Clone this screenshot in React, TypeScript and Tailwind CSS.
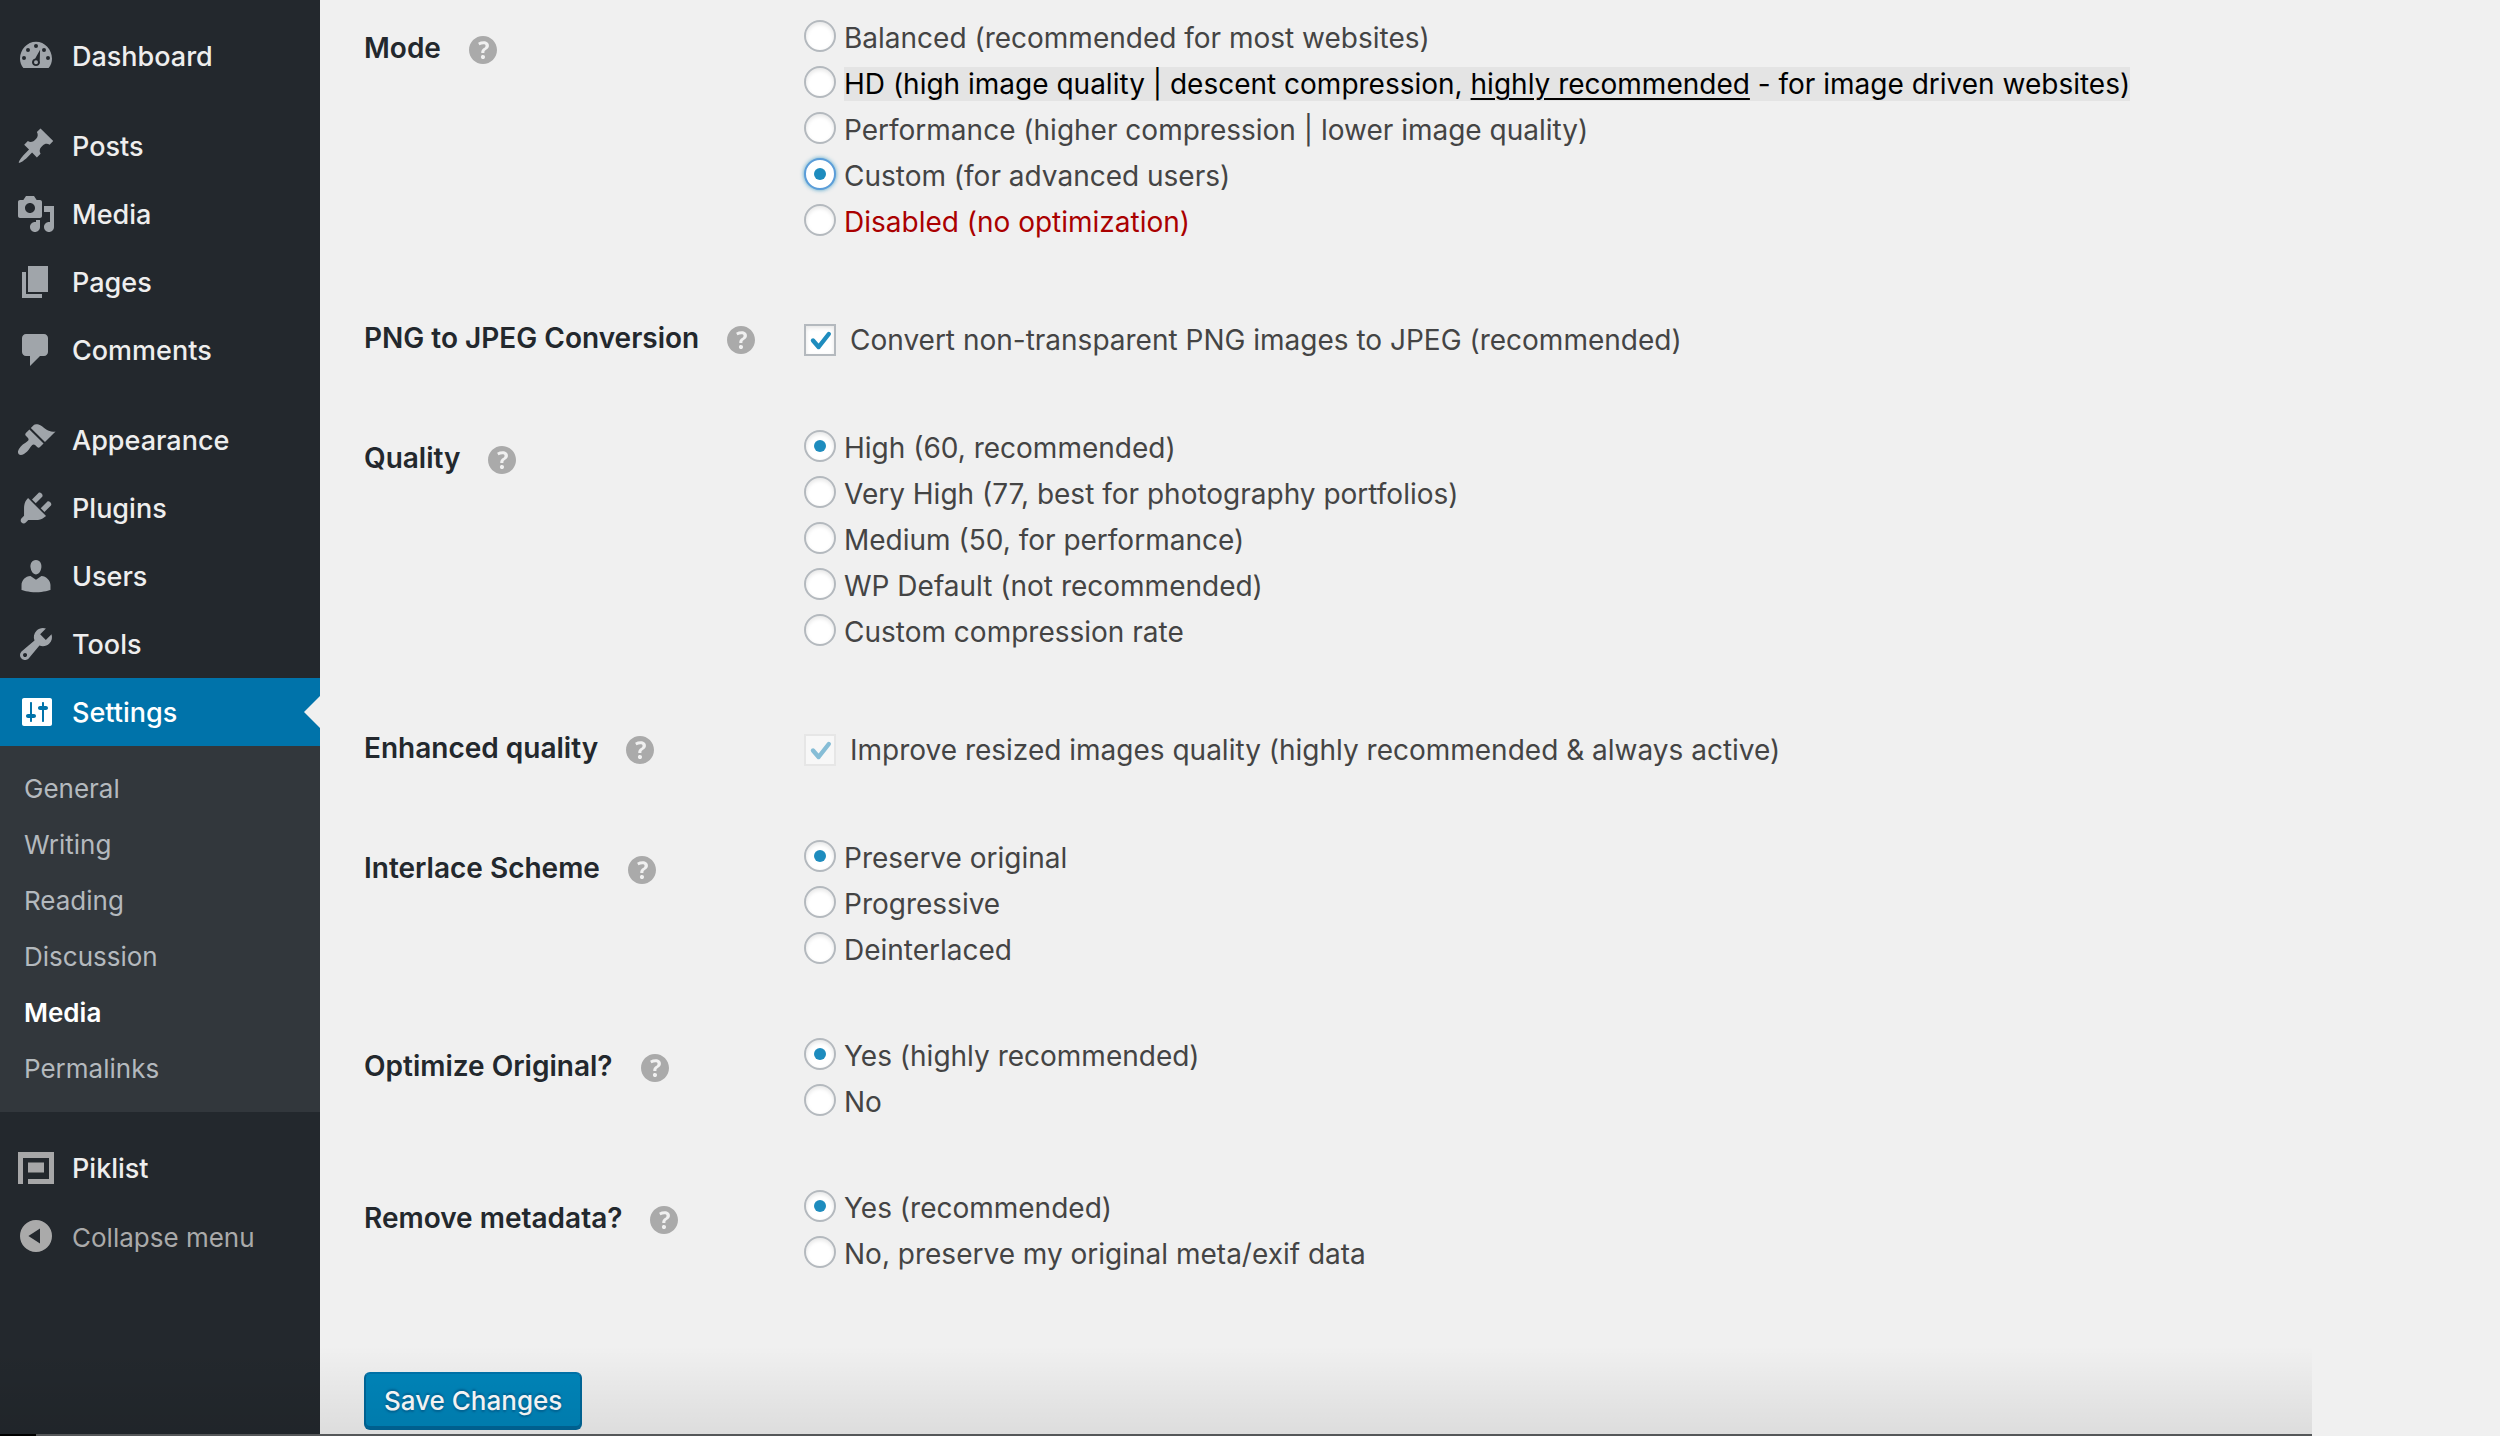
import React from "react";

type IconProps = { d: string; className?: string };

function Icon({ d, className = "" }: IconProps) {
  return (
    <svg viewBox="0 0 20 20" fill="currentColor" fillRule="evenodd" aria-hidden="true" className={`size-10 shrink-0 ${className}`}>
      <path d={d} />
    </svg>
  );
}

const icons = {
  dashboard:
    "M3.7 16h12.6c1.1-1.3 1.7-2.9 1.7-4.6C18 6.7 14.4 2.9 10 2.9S2 6.7 2 11.4c0 1.7.6 3.3 1.7 4.6zM10 4a1 1 0 1 1 0 2 1 1 0 0 1 0-2zM6 6a1 1 0 1 1 0 2 1 1 0 0 1 0-2zM14 6a1 1 0 1 1 0 2 1 1 0 0 1 0-2zM4 10a1 1 0 1 1 0 2 1 1 0 0 1 0-2zM16 10a1 1 0 1 1 0 2 1 1 0 0 1 0-2zM12.05 6.9l-.2 5.6c.1.3.15.5.15.6 0 1.05-.9 1.9-2 1.9s-2-.85-2-1.9c0-.9.7-1.7 1.6-1.9zM10 12.1a1 1 0 1 0 0 2 1 1 0 0 0 0-2z",
  posts:
    "M10.44 3.02l1.82-1.82 6.36 6.35-1.83 1.82c-1.05-.68-2.48-.57-3.41.36l-.75.75c-.92.93-1.04 2.35-.35 3.41l-1.83 1.82-2.41-2.41-2.8 2.79c-.42.42-3.38 2.71-3.8 2.29s1.86-3.39 2.28-3.81l2.79-2.79L4.1 9.36l1.83-1.82c1.05.69 2.48.57 3.4-.36l.75-.75c.93-.92 1.05-2.35.36-3.41z",
  media:
    "M13 11V4c0-.55-.45-1-1-1h-1.67L9 1H5L3.67 3H2c-.55 0-1 .45-1 1v7c0 .55.45 1 1 1h10c.55 0 1-.45 1-1zM7 4.5c1.38 0 2.5 1.12 2.5 2.5S8.38 9.5 7 9.5 4.5 8.38 4.5 7 5.62 4.5 7 4.5zM14 6h5v10.5c0 1.38-1.12 2.5-2.5 2.5S14 17.88 14 16.5s1.12-2.5 2.5-2.5c.17 0 .34.02.5.05V9h-3V6zm-4 8.05V13h2v3.5c0 1.38-1.12 2.5-2.5 2.5S7 17.88 7 16.5 8.12 14 9.5 14c.17 0 .34.02.5.05z",
  pages: "M6 15V2h10v13H6zm-1 1h8v2H3V5h2v11z",
  comments: "M5 2h9c1.1 0 2 .9 2 2v7c0 1.1-.9 2-2 2h-2l-5 5v-5H5c-1.1 0-2-.9-2-2V4c0-1.1.9-2 2-2z",
  appearance:
    "M14.48 11.06L7.41 3.99l1.5-1.5c.5-.56 2.3-.47 3.51.32 1.21.8 1.43 1.28 2.91 2.1 1.18.64 2.45 1.26 4.45.85zm-.71.71L6.7 4.7 4.93 6.47c-.39.39-.39 1.02 0 1.41l1.06 1.06c.39.39.39 1.03 0 1.42-.6.6-1.43 1.11-2.21 1.69-.35.26-.7.53-1.01.84C1.43 14.23.4 16.08 1.4 17.07c.99 1 2.84-.03 4.18-1.36.31-.31.58-.66.85-1.02.57-.78 1.08-1.61 1.69-2.21.39-.39 1.02-.39 1.41 0l1.06 1.06c.39.39 1.02.39 1.41 0z",
  plugins:
    "M13.11 4.36L9.87 7.6 8 5.73l3.24-3.24c.35-.34 1.05-.2 1.56.32.52.51.66 1.21.31 1.55zm-8 1.77l.91-1.12 9.01 9.01-1.19.84c-.71.71-2.63 1.16-3.82 1.16H6.14L4.9 17.26c-.59.59-1.54.59-2.12 0-.59-.58-.59-1.53 0-2.12l1.24-1.24v-3.88c0-1.13.4-3.19 1.09-3.89zm7.26 3.97l3.24-3.24c.34-.35 1.04-.21 1.55.31.52.51.66 1.21.31 1.55l-3.24 3.25z",
  users:
    "M10 9.25c-2.27 0-2.73-3.44-2.73-3.44C7 4.02 7.82 2 9.97 2c2.16 0 2.98 2.02 2.71 3.81 0 0-.41 3.44-2.68 3.44zm0 2.57L12.72 10c2.39 0 4.52 2.33 4.52 4.53v2.49s-3.65 1.13-7.24 1.13c-3.65 0-7.24-1.13-7.24-1.13v-2.49c0-2.25 1.94-4.48 4.47-4.48z",
  tools:
    "M16.68 9.77c-1.34 1.34-3.3 1.67-4.95.99l-5.41 6.52c-.99.99-2.59.99-3.58 0s-.99-2.59 0-3.57l6.52-5.42c-.68-1.65-.35-3.61.99-4.95 1.28-1.28 3.12-1.62 4.72-1.06l-2.89 2.89 2.82 2.82 2.86-2.87c.53 1.58.18 3.39-1.08 4.65zM3.81 16.21c.4.39 1.04.39 1.43 0 .4-.4.4-1.04 0-1.43-.39-.4-1.03-.4-1.43 0-.39.39-.39 1.03 0 1.43z",
  settings:
    "M18 16V4c0-.55-.45-1-1-1H4c-.55 0-1 .45-1 1v12c0 .55.45 1 1 1h13c.55 0 1-.45 1-1zM8 11h1c.55 0 1 .45 1 1s-.45 1-1 1H8v1.5c0 .28-.22.5-.5.5s-.5-.22-.5-.5V13H6c-.55 0-1-.45-1-1s.45-1 1-1h1V5.5c0-.28.22-.5.5-.5s.5.22.5.5V11zm5-2h-1c-.55 0-1-.45-1-1s.45-1 1-1h1V5.5c0-.28.22-.5.5-.5s.5.22.5.5V7h1c.55 0 1 .45 1 1s-.45 1-1 1h-1v5.5c0 .28-.22.5-.5.5s-.5-.22-.5-.5V9z",
  piklist: "M1 2h18v16H6v-2.5h10.5V5H3.5v13H1zM6 7.3h8v5H6z",
  collapse: "M10 2a8 8 0 1 1 0 16 8 8 0 0 1 0-16zM12 6.2v7.6L6.2 10z",
  help: "M17 10c0-3.87-3.14-7-7-7-3.87 0-7 3.13-7 7s3.13 7 7 7c3.86 0 7-3.13 7-7zm-6.3 1.48H9.14v-.43c0-.38.08-.7.24-.98s.46-.57.88-.89c.41-.29.68-.53.81-.71.14-.18.2-.39.2-.62 0-.25-.09-.44-.28-.58-.19-.13-.45-.19-.79-.19-.58 0-1.25.19-2 .57l-.64-1.28c.87-.49 1.8-.74 2.77-.74.81 0 1.45.2 1.92.58.48.39.71.91.71 1.55 0 .43-.09.8-.29 1.11-.19.32-.57.67-1.11 1.06-.38.28-.61.49-.71.63-.1.15-.15.34-.15.57v.35zm-1.47 2.74c-.18-.17-.27-.42-.27-.73 0-.33.08-.58.26-.75s.43-.25.77-.25c.32 0 .57.09.75.26s.27.42.27.74c0 .3-.09.55-.27.72-.18.18-.43.27-.75.27-.33 0-.58-.09-.76-.26z",
};

type IconName = keyof typeof icons;

function MenuItem({ icon, label, active = false }: { icon: IconName; label: string; active?: boolean }) {
  return (
    <li>
      <a
        href="#"
        aria-current={active ? "true" : undefined}
        className={`relative flex h-[68px] items-center gap-4 pl-4 ${active ? "bg-[#0073aa] text-white" : "text-[#eeeeee]"}`}
      >
        <Icon d={icons[icon]} className={active ? "text-white" : "text-[#a0a5aa]"} />
        <span className="pt-0.5">{label}</span>
        {active && (
          <span className="absolute top-[18px] right-0 border-y-[16px] border-r-[16px] border-y-transparent border-r-[#f0f0f0]" />
        )}
      </a>
    </li>
  );
}

const submenu = ["General", "Writing", "Reading", "Discussion", "Media", "Permalinks"];

function Sidebar() {
  return (
    <nav aria-label="Main menu" className="flex w-80 shrink-0 flex-col bg-[#23282d] pt-[22px] text-[27px] font-medium">
      <ul>
        <MenuItem icon="dashboard" label="Dashboard" />
      </ul>
      <ul className="mt-[22px]">
        <MenuItem icon="posts" label="Posts" />
        <MenuItem icon="media" label="Media" />
        <MenuItem icon="pages" label="Pages" />
        <MenuItem icon="comments" label="Comments" />
      </ul>
      <ul className="mt-[22px]">
        <MenuItem icon="appearance" label="Appearance" />
        <MenuItem icon="plugins" label="Plugins" />
        <MenuItem icon="users" label="Users" />
        <MenuItem icon="tools" label="Tools" />
        <MenuItem icon="settings" label="Settings" active />
      </ul>
      <ul className="bg-[#32373c] pt-[14px] pb-4 text-[26px]">
        {submenu.map((name) => (
          <li key={name}>
            <a
              href="#"
              className={`flex h-14 items-center pl-6 ${name === "Media" ? "font-semibold text-white" : "font-normal text-[#b4b9be]"}`}
            >
              {name}
            </a>
          </li>
        ))}
      </ul>
      <ul className="mt-[22px]">
        <li>
          <a href="#" className="flex h-[68px] items-center gap-4 pl-4 text-[#eeeeee]">
            <Icon d={icons.piklist} className="text-[#a7a7a8]" />
            <span className="pt-0.5">Piklist</span>
          </a>
        </li>
      </ul>
      <button type="button" className="flex h-[68px] items-center gap-4 pl-4 text-[26px] font-normal text-[#aaaaaa]">
        <Icon d={icons.collapse} />
        <span className="pt-0.5">Collapse menu</span>
      </button>
    </nav>
  );
}

function Setting({ id, title, children }: { id: string; title: string; children: React.ReactNode }) {
  return (
    <div role="group" aria-labelledby={id} className="grid grid-cols-[440px_1fr] items-start pb-[60px]">
      <div className="flex items-center gap-[22px] pt-[15px]">
        <h3 id={id} className="pb-1 text-[28px] leading-9 font-semibold text-[#23282d]">
          {title}
        </h3>
        <button type="button" aria-label={`Help: ${title}`} className="text-[#aaaaaa]">
          <Icon d={icons.help} />
        </button>
      </div>
      <div>{children}</div>
    </div>
  );
}

type Option = { label: React.ReactNode; className?: string };

function Radios({ name, options, selected, focused = false }: { name: string; options: Option[]; selected: number; focused?: boolean }) {
  return (
    <>
      {options.map((option, i) => (
        <label key={i} className="flex h-[46px] items-center gap-2">
          <input
            type="radio"
            name={name}
            defaultChecked={i === selected}
            className={`mb-1 grid size-8 shrink-0 appearance-none place-items-center rounded-full border-2 bg-white before:size-3 before:rounded-full checked:before:bg-[#1e8cbe] ${
              focused && i === selected
                ? "border-[#5b9dd9] shadow-[0_0_4px_rgba(30,140,190,0.8)]"
                : "border-[#b4b9be] shadow-[inset_0_2px_4px_rgba(0,0,0,0.1)]"
            }`}
          />
          <span className={option.className ?? "text-[#444444]"}>{option.label}</span>
        </label>
      ))}
    </>
  );
}

function Tick({ label, disabled = false }: { label: string; disabled?: boolean }) {
  return (
    <label className="mt-3 mb-0.5 flex h-[46px] items-center gap-[14px] text-[#444444]">
      <span className={`relative size-8 shrink-0 ${disabled ? "opacity-50" : ""}`}>
        <input
          type="checkbox"
          defaultChecked
          disabled={disabled}
          className={`block size-8 appearance-none border-2 bg-white ${
            disabled ? "border-[#dddddd]" : "border-[#b4b9be] shadow-[inset_0_2px_4px_rgba(0,0,0,0.1)]"
          }`}
        />
        <svg viewBox="0 0 32 32" aria-hidden="true" className="pointer-events-none absolute inset-0 size-8">
          <path d="M9 16.5l5.6 6.5L24.8 10" fill="none" stroke="#1e8cbe" strokeWidth="4.4" strokeLinecap="round" strokeLinejoin="round" />
        </svg>
      </span>
      <span>{label}</span>
    </label>
  );
}

const modes: Option[] = [
  { label: "Balanced (recommended for most websites)" },
  {
    label: (
      <>
        HD (high image quality | descent compression, <u className="underline decoration-2 underline-offset-4">highly recommended</u> - for image driven websites)
      </>
    ),
    className: "bg-[#e4e4e4] leading-[34px] text-black",
  },
  { label: "Performance (higher compression | lower image quality)" },
  { label: "Custom (for advanced users)" },
  { label: "Disabled (no optimization)", className: "text-[#aa0000]" },
];

export default function App() {
  return (
    <div className="relative flex min-h-screen bg-[#f0f0f0] font-['Inter',sans-serif]">
      <Sidebar />
      <main className="min-w-0 flex-1 pt-[15px] pl-11 text-[28px]">
        <form onSubmit={(e) => e.preventDefault()}>
          <Setting id="mode" title="Mode">
            <Radios name="mode" options={modes} selected={3} focused />
          </Setting>
          <Setting id="png" title="PNG to JPEG Conversion">
            <Tick label="Convert non-transparent PNG images to JPEG (recommended)" />
          </Setting>
          <Setting id="quality" title="Quality">
            <Radios
              name="quality"
              selected={0}
              options={[
                { label: "High (60, recommended)" },
                { label: "Very High (77, best for photography portfolios)" },
                { label: "Medium (50, for performance)" },
                { label: "WP Default (not recommended)" },
                { label: "Custom compression rate" },
              ]}
            />
          </Setting>
          <Setting id="enhanced" title="Enhanced quality">
            <Tick label="Improve resized images quality (highly recommended & always active)" disabled />
          </Setting>
          <Setting id="interlace" title="Interlace Scheme">
            <Radios
              name="interlace"
              selected={0}
              options={[{ label: "Preserve original" }, { label: "Progressive" }, { label: "Deinterlaced" }]}
            />
          </Setting>
          <Setting id="optimize" title="Optimize Original?">
            <Radios name="optimize" selected={0} options={[{ label: "Yes (highly recommended)" }, { label: "No" }]} />
          </Setting>
          <Setting id="metadata" title="Remove metadata?">
            <Radios
              name="metadata"
              selected={0}
              options={[{ label: "Yes (recommended)" }, { label: "No, preserve my original meta/exif data" }]}
            />
          </Setting>
          <button
            type="submit"
            className="mt-[35px] mb-[6px] block h-[58px] rounded-md border-2 border-[#006799] border-t-[#0073aa] bg-[#0085ba] px-[18px] text-[26px] leading-none font-medium text-white shadow-[inset_0_-2px_0_#006799] [text-shadow:0_-2px_2px_#006799,0_2px_2px_#006799]"
          >
            Save Changes
          </button>
        </form>
      </main>
      <div className="pointer-events-none absolute right-[188px] bottom-0 left-0 h-[90px] border-b-2 border-[#555759] bg-linear-to-b from-transparent to-black/8" />
      <div className="pointer-events-none absolute bottom-0 left-0 h-0.5 w-9 bg-black" />
    </div>
  );
}
